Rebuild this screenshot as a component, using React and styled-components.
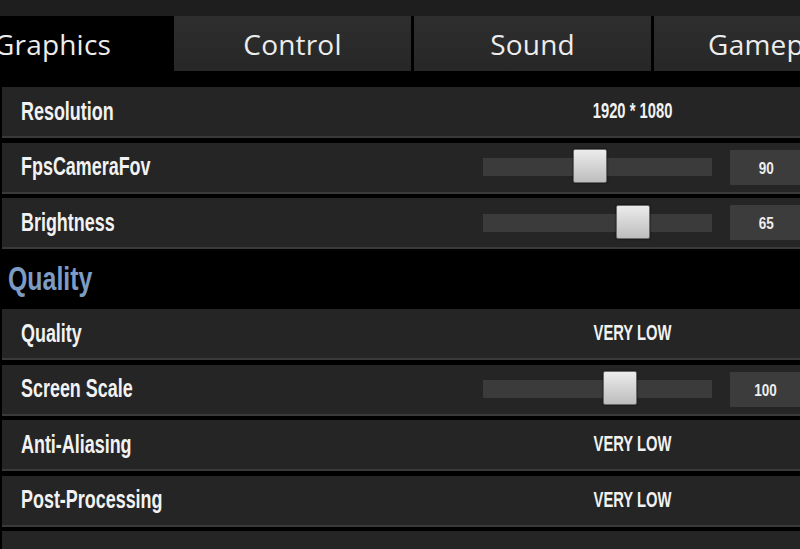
import React from 'react';
import styled, { createGlobalStyle } from 'styled-components';

const GlobalStyle = createGlobalStyle`
  html, body {
    margin: 0;
    padding: 0;
    background: #000;
  }
  body {
    width: 800px;
    height: 549px;
    overflow: hidden;
  }
`;

const Page = styled.div`
  width: 800px;
  height: 549px;
  overflow: hidden;
  background: #000;
  display: flex;
  flex-direction: column;
`;

const TopStrip = styled.div`
  height: 16px;
  background: #1e1e1e;
  flex-shrink: 0;
`;

const Tabs = styled.div`
  display: flex;
  gap: 3px;
  margin-left: -66px;
  height: 55px;
  flex-shrink: 0;
`;

const Tab = styled.div`
  width: 237px;
  flex-shrink: 0;
  display: flex;
  align-items: center;
  justify-content: center;
  background: ${p => (p.active ? '#000' : 'linear-gradient(#2e2e2e, #272727)')};
  color: #ececec;
  font-family: "Open Sans", "Liberation Sans", sans-serif;
  font-size: 28px;
  letter-spacing: 0.2px;
`;

const List = styled.div`
  display: flex;
  flex-direction: column;
  gap: 4.5px;
  padding: 16px 0 0 2px;
  width: 830px;
`;

const Row = styled.div`
  height: 49px;
  flex-shrink: 0;
  display: flex;
  align-items: center;
  background: #252525;
  border-bottom: 2px solid #3a3a3a;
  box-sizing: content-box;
`;

const Narrow = styled.span`
  display: inline-block;
  font-family: "Liberation Sans", Arial, sans-serif;
  font-weight: 700;
  white-space: nowrap;
`;

const Label = styled.div`
  width: 462px;
  padding-left: 19px;
  color: #f2f2f2;
  font-size: 22px;

  ${Narrow} {
    transform: scale(0.815, 1.2);
    transform-origin: left center;
  }
`;

const Value = styled.div`
  width: 300px;
  text-align: center;
  color: #f2f2f2;
  font-size: 18px;

  ${Narrow} {
    transform: scale(0.82, 1.22);
  }
`;

const Slider = styled.div`
  display: flex;
  align-items: center;
`;

const Track = styled.div`
  position: relative;
  width: 229px;
  height: 18px;
  background: #3b3b3b;
  margin-right: 18px;
`;

const Thumb = styled.div`
  position: absolute;
  top: -9px;
  width: 32px;
  height: 32px;
  border: 1px solid #6a6a6a;
  border-radius: 2px;
  background: linear-gradient(#ececec, #bdbdbd);
  box-shadow: 0 0 2px rgba(0, 0, 0, 0.8);
`;

const Box = styled.div`
  width: 72px;
  height: 35px;
  background: #3c3c3c;
  display: flex;
  align-items: center;
  justify-content: center;
  color: #eee;
  font-size: 15px;

  ${Narrow} {
    transform: scale(0.9, 1.1);
  }
`;

const Heading = styled.div`
  height: 51px;
  flex-shrink: 0;
  display: flex;
  align-items: center;
  padding-left: 6px;
  color: #7d9cc4;
  font-size: 30px;

  ${Narrow} {
    transform: scale(0.83, 1.1);
    transform-origin: left center;
  }
`;

const tabs = ['Graphics', 'Control', 'Sound', 'Gamepad'];

const SettingRow = ({ label, value, slider }) => (
  <Row>
    <Label><Narrow>{label}</Narrow></Label>
    {slider ? (
      <Slider>
        <Track>
          <Thumb style={{ left: `${Math.round(slider.pos * 195)}px` }} />
        </Track>
        <Box><Narrow>{slider.value}</Narrow></Box>
      </Slider>
    ) : (
      <Value><Narrow>{value}</Narrow></Value>
    )}
  </Row>
);

export default function App() {
  return (
    <Page>
      <GlobalStyle />
      <TopStrip />
      <Tabs>
        {tabs.map((t, i) => (
          <Tab key={t} active={i === 0}>{t}</Tab>
        ))}
      </Tabs>
      <List>
        <SettingRow label="Resolution" value="1920 * 1080" />
        <SettingRow label="FpsCameraFov" slider={{ pos: 0.46, value: '90' }} />
        <SettingRow label="Brightness" slider={{ pos: 0.68, value: '65' }} />
        <Heading><Narrow>Quality</Narrow></Heading>
        <SettingRow label="Quality" value="VERY LOW" />
        <SettingRow label="Screen Scale" slider={{ pos: 0.615, value: '100' }} />
        <SettingRow label="Anti-Aliasing" value="VERY LOW" />
        <SettingRow label="Post-Processing" value="VERY LOW" />
        <Row />
      </List>
    </Page>
  );
}
